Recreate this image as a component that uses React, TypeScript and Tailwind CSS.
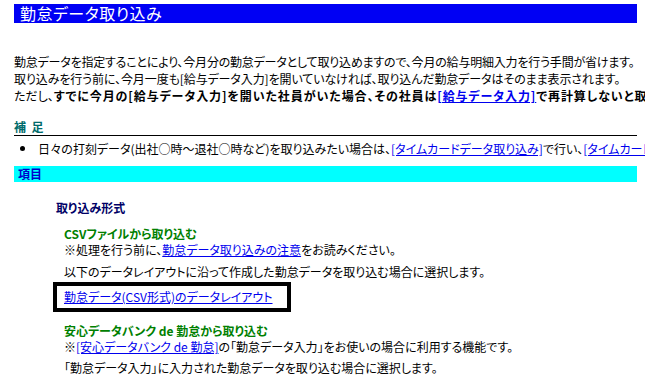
export default function App() {
  return (
    <div className="w-[645px] h-[381px] overflow-hidden bg-white text-black text-[12px] whitespace-nowrap [font-family:'Noto_Sans_CJK_JP',sans-serif] [font-feature-settings:'palt']">
      <div className="ml-[14px] w-[623px] pt-[4px]">
        <h1 className="h-[19px] bg-[#0000f4] pl-[6px] text-[16px] leading-[19px] tracking-[0.5px] text-white">勤怠データ取り込み</h1>

        <div className="mt-[30px] leading-[17px]">
          <p className="tracking-[-0.2px]">勤怠データを指定することにより、今月分の勤怠データとして取り込めますので、今月の給与明細入力を行う手間が省けます。</p>
          <p className="tracking-[-0.1px]">取り込みを行う前に、今月一度も[給与データ入力]を開いていなければ、取り込んだ勤怠データはそのまま表示されます。</p>
          <p>
            ただし、<b className="tracking-[0.9px]">すでに今月の[給与データ入力]を開いた社員がいた場合、その社員は</b>
            <a href="#" className="font-bold tracking-[0.9px] text-[#0000ee] underline">[給与データ入力]</a>
            <b className="tracking-[0.9px]">で再計算しないと取り込んだ勤怠データが反映されません。</b>
          </p>
        </div>

        <h2 className="mt-[15px] h-[17px] border-b border-black font-bold leading-[16px] text-[#006b6b]">補&nbsp;&nbsp;足</h2>
        <div className="mt-[4px] flex items-center leading-[17px]">
          <span className="ml-[6px] mr-[13px] h-[5px] w-[5px] shrink-0 rounded-full bg-black" />
          <span>
            日々の打刻データ(出社○時～退社○時など)を取り込みたい場合は、
            <a href="#" className="text-[#0000ee] underline">[タイムカードデータ取り込み]</a>
            で行い、
            <a href="#" className="text-[#0000ee] underline">[タイムカードデータ取り込み]</a>
          </span>
        </div>

        <div className="mt-[9px] h-[16px] bg-[#00ffff] pl-[4px] font-bold leading-[16px] text-[#0000cc]">項目</div>

        <div className="pl-[42px]">
          <h3 className="mt-[17px] font-bold leading-[17px] text-[#000066]">取り込み形式</h3>

          <div className="pl-[8px]">
            <h4 className="mt-[10px] font-bold leading-[16px] text-[#008000]">CSVファイルから取り込む</h4>
            <p className="leading-[16px]">
              ※処理を行う前に、<a href="#" className="text-[#0000ee] underline">勤怠データ取り込みの注意</a>をお読みください。
            </p>
            <p className="mt-[5px] leading-[17px]">以下のデータレイアウトに沿って作成した勤怠データを取り込む場合に選択します。</p>
          </div>

          <div className="ml-[-3px] mt-[2px] h-[30px] w-[238px] border-4 border-solid border-black pl-[7px] leading-[22px]">
            <a href="#" className="text-[#0000ee] underline">勤怠データ(CSV形式)のデータレイアウト</a>
          </div>

          <div className="pl-[8px]">
            <h4 className="mt-[11px] font-bold leading-[16px] text-[#008000]">安心データバンク de 勤怠から取り込む</h4>
            <p className="leading-[16px]">
              ※<a href="#" className="text-[#0000ee] underline">[安心データバンク de 勤怠]</a>の「勤怠データ入力」をお使いの場合に利用する機能です。
            </p>
            <p className="mt-[4px] leading-[17px]">「勤怠データ入力」に入力された勤怠データを取り込む場合に選択します。</p>
          </div>
        </div>
      </div>
    </div>
  );
}
